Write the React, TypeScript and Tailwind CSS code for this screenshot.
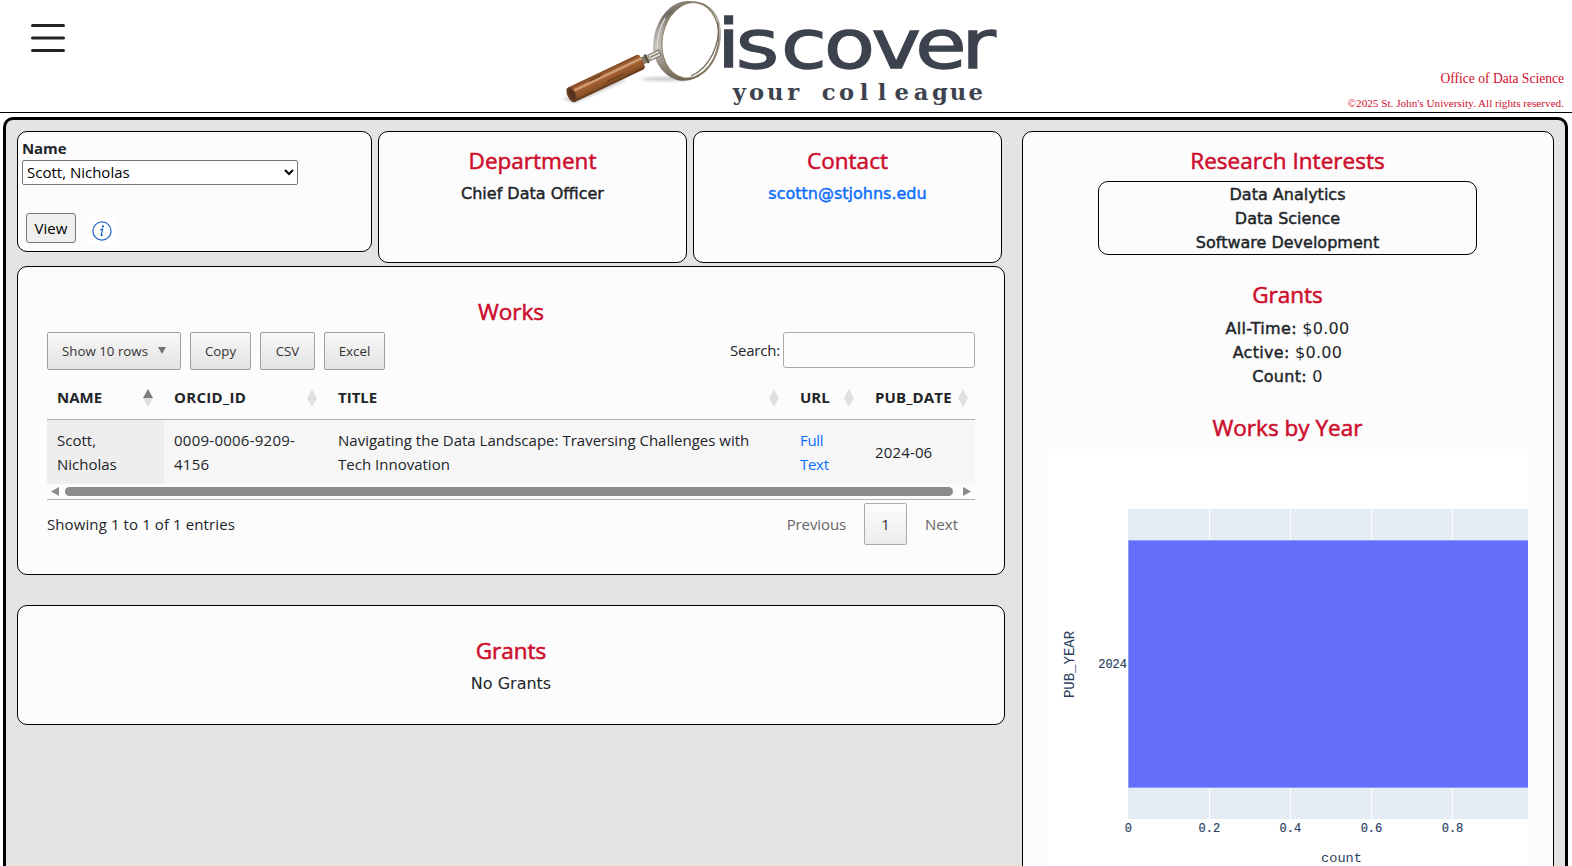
import type { ReactNode } from "react";

const heading =
  "text-center text-[22.5px] leading-[29px] tracking-[0.02px] text-[#ce0e2d] [-webkit-text-stroke:0.55px_currentColor]";
const verdana = "font-['DejaVu_Sans',sans-serif] text-base leading-6";
const strong = "[-webkit-text-stroke:0.45px_currentColor]";
const card = "rounded-[10px] border border-black bg-[#fcfcfc]";
const toolButton =
  "flex h-[38px] items-center justify-center rounded-[2px] border border-[#a0a0a0] bg-linear-to-b from-[#f9f9f9] to-[#e2e2e2] text-[13.3px] text-[#333]";

function Logo() {
  return (
    <svg className="h-28 w-[450px]" viewBox="0 0 1350 336" role="img" aria-label="Discover your colleague">
      <defs>
        <linearGradient id="wood" x1="0" y1="0" x2="0" y2="1">
          <stop offset="0" stopColor="#7d4524" />
          <stop offset="0.2" stopColor="#a0602f" />
          <stop offset="0.32" stopColor="#d9ab85" />
          <stop offset="0.45" stopColor="#a4602f" />
          <stop offset="0.8" stopColor="#8a5228" />
          <stop offset="1" stopColor="#5a3417" />
        </linearGradient>
        <linearGradient id="rim" x1="0" y1="0" x2="0.25" y2="1">
          <stop offset="0" stopColor="#b5b0a6" />
          <stop offset="0.2" stopColor="#6f6963" />
          <stop offset="0.36" stopColor="#aaa5a0" />
          <stop offset="0.55" stopColor="#c6c1bb" />
          <stop offset="0.8" stopColor="#8e867b" />
          <stop offset="1" stopColor="#6f6656" />
        </linearGradient>
        <filter id="soft" x="-20%" y="-100%" width="140%" height="300%">
          <feGaussianBlur stdDeviation="5" />
        </filter>
      </defs>
      <g filter="url(#soft)" fill="#777" opacity="0.45">
        <ellipse cx="335" cy="237" rx="75" ry="5" />
        <path d="M20 296 L60 308 L215 240 L200 238 L70 290Z" />
      </g>
      <path
        d="M395 3 C340 6 294 70 294 142 C296 190 330 234 375 242 C445 248 497 180 498 100 C498 40 460 0 395 3Z"
        fill="url(#rim)"
      />
      <ellipse cx="406" cy="121" rx="84" ry="114" transform="rotate(11 406 121)" fill="#fff" stroke="#8a7a5c" strokeWidth="3" />
      <path d="M488 66 C500 130 462 206 408 228" fill="none" stroke="#6e675c" strokeWidth="4" />
      <path d="M330 55 C312 85 306 115 306 150" fill="none" stroke="#dedbd7" strokeWidth="4" />
      <g transform="rotate(-25.5 260 183)">
        <rect x="256" y="172" width="18" height="23" rx="5" fill="#837b68" />
        <rect x="272" y="169" width="9" height="29" rx="4" fill="#5d563f" />
        <rect x="284" y="175" width="36" height="18" fill="#dedbd4" stroke="#7d776b" strokeWidth="3" />
        <path d="M288 184 H318" stroke="#77715f" strokeWidth="3" />
        <rect x="18" y="160" width="244" height="48" rx="10" fill="url(#wood)" />
        <ellipse cx="27" cy="184" rx="13" ry="24" fill="#6b4228" />
        <ellipse cx="28" cy="184" rx="8" ry="18" fill="#57331f" />
        <path d="M95 167 h40 l-8 5 h-36z M140 192 h60 l-10 4 h-50z" fill="#4f2a12" opacity="0.55" />
      </g>
      <text
        transform="scale(1.22 1)"
        x="427 498 612 724 839 949 1042"
        y="205"
        textAnchor="middle"
        fontSize="205"
        fill="#3d434e"
        stroke="#3d434e"
        strokeWidth="4"
        className="font-['DejaVu_Sans',sans-serif]"
      >
        iscover
      </text>
      <text
        x="553 605 661 715 768 821 875 927 981 1040 1098 1155 1209 1262"
        y="299"
        textAnchor="middle"
        fontSize="68"
        fill="#3d434e"
        className="font-['DejaVu_Serif',serif] font-bold"
      >
        your colleague
      </text>
    </svg>
  );
}

function SortIcon({ active = false }: { active?: boolean }) {
  return (
    <svg className="h-[18px] w-2.5 shrink-0" viewBox="0 0 10 18">
      <path d="M5 0 L10 9 H0Z" fill={active ? "#7b7d80" : "#dfe1e1"} />
      <path d="M5 18 L10 9 H0Z" fill="#dfe1e1" />
    </svg>
  );
}

function Th({ children, active, last }: { children: ReactNode; active?: boolean; last?: boolean }) {
  return (
    <div className={`flex items-center justify-between pl-[10px] font-bold ${last ? "pr-[7px]" : "pr-[11px]"}`}>
      <span className="-mt-0.5">{children}</span>
      <SortIcon active={active} />
    </div>
  );
}

const columns = "grid grid-cols-[117px_164px_462px_75px_110px]";

function WorksCard() {
  return (
    <section className={`${card} mt-[3px] h-[309px] px-[29px] pt-[30px]`}>
      <h2 className={heading}>Works</h2>
      <div className="mt-[6px] flex justify-between">
        <div className="flex gap-[9px]">
          <button className={`${toolButton} w-[134px] gap-[10px]`}>
            Show 10 rows
            <svg className="mb-0.5 h-[7px] w-2" viewBox="0 0 8 7">
              <path d="M0 0 H8 L4 7Z" fill="#707274" />
            </svg>
          </button>
          <button className={`${toolButton} w-[61px]`}>Copy</button>
          <button className={`${toolButton} w-[55px]`}>CSV</button>
          <button className={`${toolButton} w-[61px]`}>Excel</button>
        </div>
        <label className="flex h-9 items-center gap-[3px] tracking-[-0.2px]">
          Search:
          <input className="h-9 w-48 rounded-[3px] border border-[#aaa] bg-transparent px-1" />
        </label>
      </div>
      <div className={`${columns} mt-[7px] h-[43px] border-b border-[#b0b0b0]`}>
        <Th active>NAME</Th>
        <Th>
          <span className="tracking-[0.3px]">ORCID_ID</span>
        </Th>
        <Th>TITLE</Th>
        <Th>URL</Th>
        <Th last>
          <span className="tracking-[0.15px]">PUB_DATE</span>
        </Th>
      </div>
      <div className={`${columns} h-16 items-center bg-[#f6f6f6]`}>
        <div className="bg-[#eeeeee] py-2 pl-[10px]">
          Scott,
          <br />
          Nicholas
        </div>
        <div className="pl-[10px] tracking-[0.25px]">
          0009-0006-9209-
          <br />
          4156
        </div>
        <div className="pl-[10px] tracking-[0.01px]">
          Navigating the Data Landscape: Traversing Challenges with
          <br />
          Tech Innovation
        </div>
        <div className="pl-[10px] tracking-[-0.3px] text-[#0d6efd]">
          Full
          <br />
          Text
        </div>
        <div className="pl-[10px] tracking-[0.15px]">2024-06</div>
      </div>
      <div className="flex h-4 items-center gap-[6px] border-b border-[#b0b0b0] pr-1 pb-px pl-1">
        <svg className="h-[9px] w-2" viewBox="0 0 8 9">
          <path d="M8 0 V9 L0 4.5Z" fill="#8b8b8b" />
        </svg>
        <div className="h-[9px] w-[888px] rounded-full bg-[#8b8b8b]" />
        <svg className="ml-auto h-[9px] w-2" viewBox="0 0 8 9">
          <path d="M0 0 V9 L8 4.5Z" fill="#8b8b8b" />
        </svg>
      </div>
      <div className="flex justify-between pt-[3px]">
        <div className="pt-[9px] tracking-[0.1px]">Showing 1 to 1 of 1 entries</div>
        <div className="flex h-[42px] items-center pr-[17px] text-[#666]">
          <span className="tracking-[-0.1px]">Previous</span>
          <span className="mr-[18px] ml-[18px] flex h-[42px] w-[43px] items-center justify-center rounded-[2px] border border-[#aaa] bg-linear-to-b from-[#fcfcfc] to-[#ececec] text-[#333]">
            1
          </span>
          <span>Next</span>
        </div>
      </div>
    </section>
  );
}

const ticks = ["0", "0.2", "0.4", "0.6", "0.8"];

function YearChart() {
  return (
    <svg className="block h-[450px] w-[480px] bg-white font-['Liberation_Mono',monospace]" viewBox="0 0 480 450">
      <rect x="80" y="60" width="400" height="310" fill="#e5ecf6" />
      {ticks.slice(1).map((t, i) => (
        <path key={t} d={`M${161.5 + i * 81} 60 V370`} stroke="#fff" />
      ))}
      <rect x="80.5" y="91.5" width="420" height="247" fill="#636efa" stroke="#949cf5" />
      {ticks.map((t, i) => (
        <text key={t} x={80.3 + i * 81.05} y="383" textAnchor="middle" fontSize="12" fill="#2a3f5f" stroke="#2a3f5f" strokeWidth="0.2">
          {t}
        </text>
      ))}
      <text x="79" y="219" textAnchor="end" fontSize="12" fill="#2a3f5f" stroke="#2a3f5f" strokeWidth="0.2">
        2024
      </text>
      <text x="293.5" y="412.5" textAnchor="middle" fontSize="13.6" fill="#2a3f5f">
        count
      </text>
      <text transform="translate(26 215.5) rotate(-90)" textAnchor="middle" fontSize="14" fill="#2a3f5f">
        PUB_YEAR
      </text>
    </svg>
  );
}

export default function App() {
  return (
    <div className="h-[866px] w-[1572px] overflow-hidden bg-white font-['Open_Sans','Noto_Sans',sans-serif] text-[15px] leading-6 text-[#212529]">
      <header className="grid h-[113px] grid-cols-[555px_450px_1fr] border-b border-black">
        <div className="pt-[23px] pl-[30px]">
          <svg className="h-[30px] w-9" viewBox="0 0 36 30" stroke="#212529" strokeWidth="3" strokeLinecap="round">
            <path d="M2.5 2.5 H33.5 M2.5 15 H33.5 M2.5 27.5 H33.5" />
          </svg>
        </div>
        <Logo />
        <div className="pt-[67px] pr-2 text-right font-['Liberation_Serif',serif] text-[#ce0e2d]">
          <div className="text-[13.55px]">Office of Data Science</div>
          <div className="text-[11.2px]">©2025 St. John's University. All rights reserved.</div>
        </div>
      </header>

      <main className="mt-1 ml-[3px] flex h-[1200px] w-[1565px] items-start rounded-[10px] border-3 border-black bg-[#e5e4e2] pt-[11px] pl-[11px]">
        <div className="w-[988px]">
          <div className="flex h-[132px] items-start">
            <section className={`${card} mr-[6px] h-[121px] w-[355px] pt-1 pl-1`}>
              <div className="tracking-[-0.1px] font-bold">Name</div>
              <select className="block h-[25px] w-[276px] rounded-[2px] border border-[#767676] bg-white pb-px text-[15px] leading-[22px] text-black">
                <option>Scott, Nicholas</option>
              </select>
              <div className="mt-7 ml-1 flex">
                <button className="h-[30px] w-[50px] rounded-[3px] border border-[#767676] bg-[#efefef] text-black">
                  View
                </button>
                <div className="mt-[3px] ml-3 flex h-[29px] w-[27px] items-center justify-center bg-white">
                  <svg className="h-5 w-5" viewBox="0 0 20 20">
                    <circle cx="10" cy="10" r="9.1" fill="none" stroke="#1c64c8" strokeWidth="1.2" />
                    <circle cx="10.9" cy="5.4" r="1.15" fill="#1c64c8" />
                    <path d="M8 8.6 L10.6 8.2 L9.2 14.2 Q9.1 15 10 14.5 L10.8 13.9" fill="none" stroke="#1c64c8" strokeWidth="1.25" />
                  </svg>
                </div>
              </div>
            </section>
            <section className={`${card} mr-[6px] h-[132px] w-[309px] pt-[14px] text-center`}>
              <h2 className={heading}>Department</h2>
              <div className={`${verdana} ${strong} mt-[7px]`}>Chief Data Officer</div>
            </section>
            <section className={`${card} h-[132px] w-[309px] pt-[14px] text-center`}>
              <h2 className={heading}>Contact</h2>
              <div className={`${verdana} ${strong} mt-[7px] text-[#0d6efd]`}>scottn@stjohns.edu</div>
            </section>
          </div>
          <WorksCard />
          <section className={`${card} mt-[30px] h-[120px] pt-[30px] text-center`}>
            <h2 className={heading}>Grants</h2>
            <div className={`${verdana} mt-[7px]`}>No Grants</div>
          </section>
        </div>

        <aside className={`${card} ml-[17px] flex h-[1100px] w-[532px] flex-col items-center pt-[14px] pr-px`}>
          <h2 className={heading}>Research Interests</h2>
          <div className={`${verdana} ${strong} mt-[6px] h-[74px] w-[379px] rounded-[10px] border border-black pt-px text-center`}>
            <div>Data Analytics</div>
            <div>Data Science</div>
            <div>Software Development</div>
          </div>
          <h2 className={`${heading} mt-[25px]`}>Grants</h2>
          <div className={`${verdana} mt-2 text-center tracking-[0.3px]`}>
            <div>
              <span className={strong}>All-Time:</span> $0.00
            </div>
            <div>
              <span className={strong}>Active:</span> $0.00
            </div>
            <div>
              <span className={strong}>Count:</span> 0
            </div>
          </div>
          <h2 className={`${heading} mt-6`}>Works by Year</h2>
          <div className="mt-[7px]">
            <YearChart />
          </div>
        </aside>
      </main>
    </div>
  );
}
